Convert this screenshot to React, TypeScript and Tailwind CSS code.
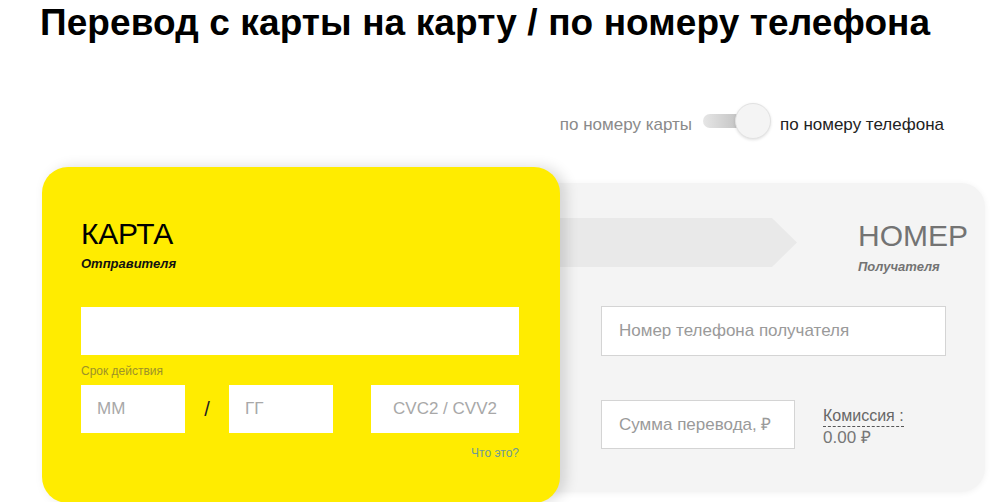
import React from "react";

export default function App() {
  const sans = "font-['Liberation_Sans',Arial,sans-serif]";
  return (
    <div className={`w-[1000px] h-[502px] overflow-hidden bg-white ${sans}`}>
      <h1 className="pl-[40px] pt-[1px] h-[62px] text-[37px] leading-[44px] font-bold text-black tracking-[0.1px] whitespace-nowrap">
        Перевод с карты на карту / по номеру телефона
      </h1>

      <div className="flex items-center justify-end pr-[56px] h-[52px] mt-[33px]">
        <span className="mt-[8px] text-[17px] text-[#8a8a8a]">по номеру карты</span>
        <div className="relative ml-[11px] w-[68px] h-[36px] flex items-center">
          <div className="w-[48px] h-[14px] rounded-full bg-gradient-to-r from-[#e6e6e6] to-[#b8b8b8]" />
          <div className="absolute right-0 top-0 w-[36px] h-[36px] rounded-full bg-[#f4f4f4] border border-[#e2e2e2] shadow-[0_1px_3px_rgba(0,0,0,0.12)]" />
        </div>
        <span className="mt-[8px] ml-[9px] text-[17px] text-[#222]">по номеру телефона</span>
      </div>

      <div className="flex items-start pl-[42px] mt-[20px]">
        {/* Yellow sender card */}
        <div className="relative z-10 w-[518px] h-[336px] shrink-0 rounded-[26px] bg-[#ffec00] shadow-[6px_0_14px_rgba(0,0,0,0.14)] px-[39px] pt-[50px]">
          <div className="text-[30px] leading-[34px] text-black tracking-[-0.3px]">КАРТА</div>
          <div className="text-[13px] leading-[16px] italic font-bold text-[#111] mt-[5px]">Отправителя</div>
          <div className="mt-[35px] h-[48px] w-[438px] bg-white" />
          <div className="mt-[8px] text-[12px] leading-[16px] text-[#9d9228]">Срок действия</div>
          <div className="mt-[6px] flex items-center">
            <div className="w-[104px] h-[48px] bg-white flex items-center pl-[16px] text-[17px] text-[#a8a8a8]">ММ</div>
            <div className="w-[44px] text-center text-[20px] text-[#222]">/</div>
            <div className="w-[104px] h-[48px] bg-white flex items-center pl-[16px] text-[17px] text-[#a8a8a8]">ГГ</div>
            <div className="ml-[38px] w-[148px] h-[48px] bg-white flex items-center justify-center text-[17px] text-[#a8a8a8]">CVC2 / CVV2</div>
          </div>
          <div className="mt-[12px] w-[438px] text-right text-[12px] leading-[16px] text-[#6e9a96]">Что это?</div>
        </div>

        {/* Gray recipient card */}
        <div className="ml-[-40px] mt-[16px] w-[465px] h-[309px] shrink-0 rounded-[24px] bg-[#f4f4f4] shadow-[0_1px_6px_rgba(0,0,0,0.06)]">
          <div className="flex items-start pt-[35px]">
            <div className="w-[277px] h-[49px] bg-[#e9e9e9] [clip-path:polygon(0_0,252px_0,100%_50%,252px_100%,0_100%)]" />
            <div className="ml-[61px] mt-[1px]">
              <div className="text-[30px] leading-[34px] text-[#737373]">НОМЕР</div>
              <div className="text-[13px] leading-[16px] italic font-bold text-[#737373] mt-[6px]">Получателя</div>
            </div>
          </div>
          <div className="ml-[81px] mt-[31px] w-[345px] h-[50px] bg-white border border-[#d4d4d4] flex items-center pl-[17px] text-[17px] text-[#9a9a9a]">
            Номер телефона получателя
          </div>
          <div className="ml-[81px] mt-[44px] flex items-start">
            <div className="w-[194px] h-[49px] bg-white border border-[#d4d4d4] flex items-center pl-[17px] text-[17px] text-[#9a9a9a]">
              Сумма перевода, ₽
            </div>
            <div className="ml-[28px] mt-[4px]">
              <div className="text-[16px] leading-[19px] text-[#666] border-b border-dashed border-[#555] pb-[1px] inline-block">Комиссия :</div>
              <div className="text-[17px] leading-[20px] text-[#777]">0.00 ₽</div>
            </div>
          </div>
        </div>
      </div>
    </div>
  );
}
